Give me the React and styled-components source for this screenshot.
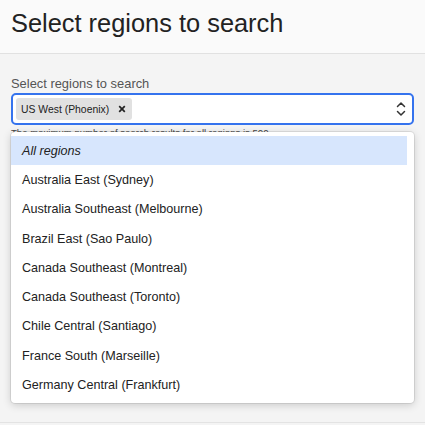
import React from 'react'
import styled, { createGlobalStyle } from 'styled-components'

const GlobalStyle = createGlobalStyle`
  body {
    margin: 0;
    background: #f4f4f4;
    font-family: "Liberation Sans", Arial, sans-serif;
    color: #222;
  }
`

const Page = styled.div`
  min-height: 425px;
  display: flex;
  flex-direction: column;
`

const Header = styled.header`
  height: 54px;
  box-sizing: border-box;
  padding: 11px 11px 0;
  background: #fafafa;
  border-bottom: 1px solid #e1e1e1;
`

const Title = styled.h1`
  margin: 0;
  font-size: 25.4px;
  line-height: 25px;
  font-weight: 400;
  color: #222;
`

const Main = styled.main`
  flex: 1;
  padding: 21px 11px 0;
`

const Field = styled.div`
  position: relative;
`

const Label = styled.label`
  display: block;
  font-size: 12.9px;
  line-height: 17px;
  color: #555;
  margin-bottom: 1px;
`

const SelectBox = styled.div`
  height: 32px;
  box-sizing: border-box;
  border: 2px solid #3573ee;
  border-radius: 5px;
  background: #fff;
  padding: 2px 3px;
  display: flex;
  align-items: center;
`

const Chip = styled.span`
  height: 22px;
  box-sizing: border-box;
  display: inline-flex;
  align-items: center;
  gap: 9px;
  padding: 0 6px 0 5px;
  background: #e1e1e1;
  border-radius: 3px;
  font-size: 10.4px;
  color: #222;
`

const Chevrons = styled.svg`
  margin-left: auto;
  margin-right: 3px;
`

const Help = styled.div`
  margin-top: 2px;
  font-size: 9.6px;
  line-height: 12px;
  color: #444;
`

const Menu = styled.ul`
  position: absolute;
  top: 57px;
  left: 0;
  right: 0;
  height: 271px;
  margin: 0;
  padding: 4px 7px 0 0;
  box-sizing: border-box;
  list-style: none;
  background: #fff;
  border-radius: 4px;
  box-shadow: 0 0 0 1px rgba(0, 0, 0, 0.08), 0 2px 8px rgba(0, 0, 0, 0.18);
  overflow: hidden;
`

const Item = styled.li`
  height: 29.3px;
  display: flex;
  align-items: center;
  padding-left: 11px;
  font-size: 12.6px;
  color: #222;
  background: ${p => (p.$active ? '#d7e6fd' : 'transparent')};
  font-style: ${p => (p.$italic ? 'italic' : 'normal')};
`

const Footer = styled.footer`
  height: 2px;
  border-top: 1px solid #e3e3e3;
`

const regions = [
  'Australia East (Sydney)',
  'Australia Southeast (Melbourne)',
  'Brazil East (Sao Paulo)',
  'Canada Southeast (Montreal)',
  'Canada Southeast (Toronto)',
  'Chile Central (Santiago)',
  'France South (Marseille)',
  'Germany Central (Frankfurt)',
]

export default function App() {
  return (
    <Page>
      <GlobalStyle />
      <Header>
        <Title>Select regions to search</Title>
      </Header>
      <Main>
        <Field>
          <Label>Select regions to search</Label>
          <SelectBox>
            <Chip>
              US West (Phoenix)
              <svg width="8" height="8" viewBox="0 0 8 8">
                <path d="M1.2 1.2 L6.8 6.8 M6.8 1.2 L1.2 6.8" stroke="#222" strokeWidth="1.7" />
              </svg>
            </Chip>
            <Chevrons width="10" height="16" viewBox="0 0 10 16">
              <path d="M1.5 5.5 L5 2 L8.5 5.5 M1.5 10.5 L5 14 L8.5 10.5" fill="none" stroke="#333" strokeWidth="1.5" strokeLinecap="round" strokeLinejoin="round" />
            </Chevrons>
          </SelectBox>
          <Help>The maximum number of search results for all regions is 500.</Help>
          <Menu>
            <Item $active $italic>All regions</Item>
            {regions.map(r => (
              <Item key={r}>{r}</Item>
            ))}
          </Menu>
        </Field>
      </Main>
      <Footer />
    </Page>
  )
}
